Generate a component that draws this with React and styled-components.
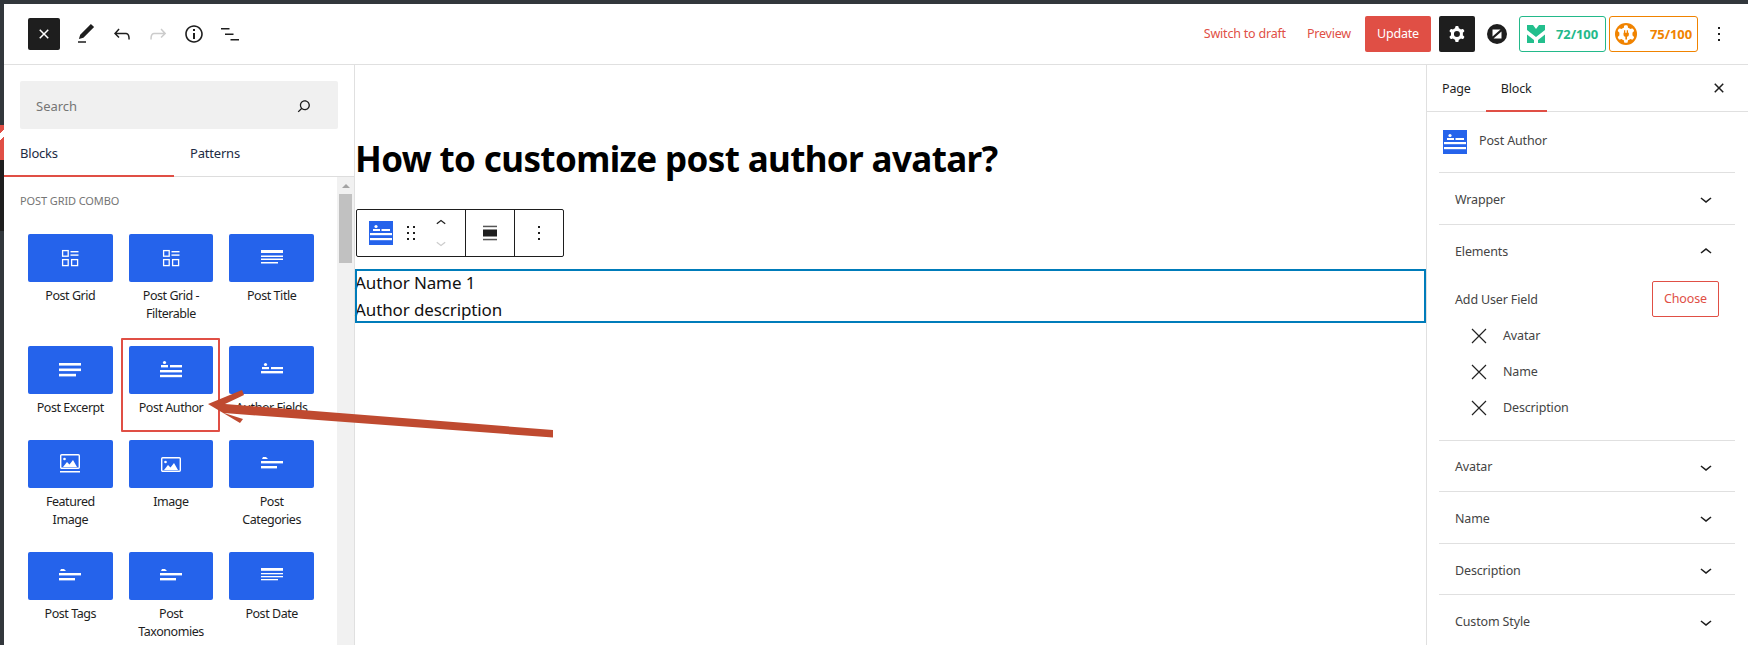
import React from 'react'
import styled, { createGlobalStyle } from 'styled-components'

const RED = '#e04f45'
const INK = '#1e1e1e'
const BLUE = '#2563eb'

const GlobalStyle = createGlobalStyle`
  html, body {
    margin: 0;
    padding: 0;
    background: #fff;
  }
  body {
    font-family: "Noto Sans", "Open Sans", sans-serif;
    font-size: 13px;
    color: ${INK};
  }
  * {
    box-sizing: border-box;
  }
`

const Shell = styled.div`
  position: relative;
  width: 1748px;
  height: 645px;
  overflow: hidden;
  display: flex;
  flex-direction: column;
`
const TopStrip = styled.div`
  height: 4px;
  flex: none;
  background: #32373c;
`
const Frame = styled.div`
  flex: 1;
  min-height: 0;
  display: flex;
`
const SideStrip = styled.div`
  width: 4px;
  flex: none;
  display: flex;
  flex-direction: column;
`
const StripPart = styled.div`
  height: ${p => p.$h}px;
  flex: ${p => (p.$h ? 'none' : 1)};
  background: ${p => p.$c};
`
const StripMark = styled.div`
  height: 35px;
  flex: none;
  background: linear-gradient(135deg, ${RED} 22%, #fff 22%, #fff 40%, ${RED} 40%);
`
const Editor = styled.div`
  flex: 1;
  min-width: 0;
  display: flex;
  flex-direction: column;
`
const TopBar = styled.header`
  height: 61px;
  flex: none;
  display: flex;
  align-items: center;
  justify-content: space-between;
  padding: 0 17px 1px 24px;
  border-bottom: 1px solid #e0e0e0;
`
const ToolGroup = styled.div`
  display: flex;
  align-items: center;
  gap: 12px;
`
const CloseButton = styled.div`
  width: 32px;
  height: 32px;
  margin-right: 2px;
  border-radius: 2px;
  background: ${INK};
  display: flex;
  align-items: center;
  justify-content: center;
`
const ActionGroup = styled.div`
  display: flex;
  align-items: center;
`
const TextAction = styled.span`
  color: ${RED};
  margin-right: ${p => p.$gap}px;
  font-size: 12.5px;
  letter-spacing: -0.2px;
`
const UpdateButton = styled.div`
  width: 66px;
  height: 36px;
  margin-right: 8px;
  border-radius: 2px;
  background: ${RED};
  color: #fff;
  font-size: 12.5px;
  letter-spacing: -0.2px;
  display: flex;
  align-items: center;
  justify-content: center;
`
const SettingsButton = styled.div`
  width: 36px;
  height: 36px;
  margin-right: 12px;
  border-radius: 2px;
  background: ${INK};
  display: flex;
  align-items: center;
  justify-content: center;
`
const ScoreBadge = styled.div`
  width: ${p => p.$w}px;
  height: 36px;
  margin-left: ${p => p.$gap}px;
  padding: 0 ${p => p.$pad}px;
  border: 1px solid ${p => p.$c};
  border-radius: 3px;
  color: ${p => p.$c};
  font-size: 13px;
  font-weight: 700;
  letter-spacing: -0.1px;
  display: flex;
  align-items: center;
  justify-content: space-between;
`
const KebabSlot = styled.div`
  width: 24px;
  height: 24px;
  margin-left: 9px;
`
const Body = styled.div`
  flex: 1;
  min-height: 0;
  display: flex;
`
const Inserter = styled.aside`
  width: 351px;
  flex: none;
  display: flex;
  flex-direction: column;
  border-right: 1px solid #e0e0e0;
`
const SearchBox = styled.div`
  height: 48px;
  margin: 16px 16px 0;
  padding: 1px 24px 0 16px;
  border-radius: 2px;
  background: #f0f0f0;
  color: #757575;
  display: flex;
  align-items: center;
  justify-content: space-between;
`
const InserterTabs = styled.div`
  height: 48px;
  flex: none;
  display: flex;
  border-bottom: 1px solid #ddd;
`
const InserterTab = styled.div`
  width: 170px;
  height: 48px;
  padding: 2px 16px 0;
  color: #1d2b44;
  font-size: 13px;
  letter-spacing: -0.2px;
  display: flex;
  align-items: center;
  border-bottom: 2px solid ${p => (p.$active ? RED : 'transparent')};
`
const InserterBody = styled.div`
  flex: 1;
  min-height: 0;
  display: flex;
`
const BlockList = styled.div`
  flex: 1;
  min-width: 0;
  padding-top: 17px;
`
const CategoryTitle = styled.div`
  margin-left: 16px;
  color: #757575;
  font-size: 11px;
  line-height: 14px;
  letter-spacing: -0.1px;
  text-transform: uppercase;
`
const TileGrid = styled.div`
  width: 286px;
  margin: 26px 0 0 24px;
  display: grid;
  grid-template-columns: repeat(3, 1fr);
  column-gap: 16px;
`
const Tile = styled.div`
  position: relative;
  padding-bottom: 23px;
  text-align: center;
  &::after {
    content: ${p => (p.$marked ? "''" : 'none')};
    position: absolute;
    top: -8px;
    left: -8px;
    right: -7px;
    bottom: 8px;
    border: 2px solid ${RED};
    border-radius: 1px;
  }
`
const TileIcon = styled.div`
  height: 48px;
  border-radius: 2px;
  background: ${BLUE};
  display: flex;
  align-items: center;
  justify-content: center;
`
const TileLabel = styled.div`
  margin-top: 5px;
  font-size: 12.5px;
  line-height: 18px;
  letter-spacing: -0.45px;
  white-space: pre-line;
`
const Scrollbar = styled.div`
  width: 17px;
  flex: none;
  padding: 7px 2px 0;
  background: #f1f1f1;
`
const ScrollArrow = styled.div`
  width: 0;
  height: 0;
  margin: 0 auto 6px;
  border-left: 4px solid transparent;
  border-right: 4px solid transparent;
  border-bottom: 4px solid #a3a3a3;
`
const ScrollThumb = styled.div`
  height: 69px;
  background: #c1c1c1;
`
const Canvas = styled.main`
  flex: 1;
  min-width: 0;
  padding-top: 72px;
`
const PostTitle = styled.h1`
  margin: 0;
  height: 44px;
  color: #000;
  font-size: 35px;
  font-weight: 700;
  line-height: 44px;
  letter-spacing: -0.62px;
  white-space: nowrap;
`
const BlockToolbar = styled.div`
  width: 208px;
  height: 48px;
  margin: 28px 0 12px 1px;
  border: 1px solid ${INK};
  border-radius: 2px;
  display: flex;
`
const ToolbarSection = styled.div`
  width: ${p => p.$w}px;
  flex: none;
  display: flex;
  align-items: center;
  justify-content: center;
  border-left: 1px solid ${INK};
`
const MoverSection = styled.div`
  width: 108px;
  flex: none;
  padding-left: 12px;
  display: flex;
  align-items: center;
`
const DragSlot = styled.div`
  width: 24px;
  height: 24px;
  margin-left: 6px;
`
const MoverStack = styled.div`
  width: 16px;
  margin-left: 10px;
  display: flex;
  flex-direction: column;
  align-items: center;
`
const SelectedBlock = styled.div`
  height: 54px;
  outline: 2px solid #007cba;
  outline-offset: -2px;
  color: #111;
  font-size: 17px;
  line-height: 27px;
  letter-spacing: -0.12px;
`
const Sidebar = styled.aside`
  width: 322px;
  flex: none;
  border-left: 1px solid #e0e0e0;
  color: #444;
  font-size: 12.5px;
  letter-spacing: -0.15px;
`
const SidebarTabs = styled.div`
  height: 47px;
  padding-right: 17px;
  display: flex;
  align-items: stretch;
  border-bottom: 1px solid #e0e0e0;
`
const SidebarTab = styled.div`
  padding: 2px 15px 0;
  color: ${INK};
  display: flex;
  align-items: center;
  border-bottom: 2px solid ${p => (p.$active ? RED : 'transparent')};
  margin-bottom: -1px;
`
const SidebarClose = styled.div`
  margin-left: auto;
  display: flex;
  align-items: center;
`
const Panels = styled.div`
  margin: 0 13px 0 12px;
`
const BlockCard = styled.div`
  height: 61px;
  padding-left: 4px;
  display: flex;
  align-items: center;
  gap: 12px;
  border-bottom: 1px solid #e0e0e0;
`
const CardName = styled.span`
  padding-bottom: 3px;
`
const Panel = styled.section`
  border-bottom: 1px solid #e0e0e0;
`
const PanelHeader = styled.div`
  height: ${p => (p.$open ? 52 : 50.6)}px;
  padding: 2px 17px 0 16px;
  display: flex;
  align-items: center;
  justify-content: space-between;
`
const PanelContent = styled.div`
  padding: 4px 16px 15px;
`
const FieldRow = styled.div`
  height: 36px;
  display: flex;
  align-items: center;
  justify-content: space-between;
`
const FieldLabel = styled.span`
  padding-top: 2px;
`
const ChooseButton = styled.div`
  width: 67px;
  height: 36px;
  border: 1px solid ${RED};
  border-radius: 2px;
  color: ${RED};
  display: flex;
  align-items: center;
  justify-content: center;
`
const FieldItem = styled.div`
  height: 36px;
  padding: 2px 0 0 16px;
  display: flex;
  align-items: center;
  gap: 16px;
`
const ArrowOverlay = styled.svg`
  position: absolute;
  left: 200px;
  top: 385px;
`

const Glyph = ({ d, size = 24, color = INK, evenOdd }) => (
  <svg width={size} height={size} viewBox='0 0 24 24' fill={color}>
    <path d={d} fillRule={evenOdd ? 'evenodd' : undefined} />
  </svg>
)

const paths = {
  pen: 'M20.1 5.1L16.9 2 6.2 12.7l-1.3 4.4 4.5-1.3L20.1 5.1zM4 20.8h8v-1.5H4v1.5z',
  undo: 'M18.3 11.7c-.6-.6-1.4-.9-2.3-.9H6.7l2.9-3.3-1.1-1-4.5 5L8.5 16l1-1-2.7-2.7H16c.5 0 .9.2 1.3.5 1 1 1 3.4 1 4.5v.3h1.5v-.2c0-1.5 0-4.3-1.5-5.7z',
  redo: 'M15.6 6.5l-1.1 1 2.9 3.3H8c-.9 0-1.7.3-2.3.9-1.4 1.5-1.4 4.2-1.4 5.6v.2h1.5v-.3c0-1.1 0-3.5 1-4.5.3-.3.7-.5 1.3-.5h9.2L14.5 15l1.1 1.1 4.6-4.6-4.6-5z',
  info: 'M12 3.2c-4.8 0-8.8 3.9-8.8 8.8 0 4.8 3.9 8.8 8.8 8.8 4.8 0 8.8-3.9 8.8-8.8 0-4.8-4-8.8-8.8-8.8zm0 16c-4 0-7.2-3.3-7.2-7.2C4.8 8 8 4.8 12 4.8s7.2 3.3 7.2 7.2c0 4-3.2 7.2-7.2 7.2zM11 17h2v-6h-2v6zm0-8h2V7h-2v2z',
  list: 'M3 6h8.5v1.5H3zM7 11.5h8.5V13H7zM12.5 17H21v1.5h-8.5z',
  close: 'M12 13.06l3.712 3.713 1.061-1.06L13.061 12l3.712-3.712-1.06-1.06L12 10.938 8.288 7.227l-1.061 1.06L10.939 12l-3.712 3.712 1.06 1.061L12 13.061z',
  search: 'M13 5c-3.3 0-6 2.7-6 6 0 1.4.5 2.7 1.3 3.7l-3.8 3.8 1.1 1.1 3.8-3.8c1 .8 2.3 1.3 3.7 1.3 3.3 0 6-2.7 6-6S16.3 5 13 5zm0 10.5c-2.5 0-4.5-2-4.5-4.5s2-4.5 4.5-4.5 4.5 2 4.5 4.5-2 4.5-4.5 4.5z',
  cog: 'M10.289 4.836A1 1 0 0111.275 4h1.306a1 1 0 01.987.836l.244 1.466c.787.26 1.503.679 2.108 1.218l1.393-.522a1 1 0 011.216.437l.653 1.13a1 1 0 01-.23 1.273l-1.148.944a6.025 6.025 0 010 2.435l1.149.946a1 1 0 01.23 1.272l-.653 1.13a1 1 0 01-1.216.437l-1.394-.522c-.605.54-1.32.958-2.108 1.218l-.244 1.466a1 1 0 01-.987.836h-1.306a1 1 0 01-.986-.836l-.244-1.466a5.995 5.995 0 01-2.108-1.218l-1.394.522a1 1 0 01-1.217-.436l-.653-1.131a1 1 0 01.23-1.272l1.149-.946a6.026 6.026 0 010-2.435l-1.148-.944a1 1 0 01-.23-1.272l.653-1.131a1 1 0 011.217-.437l1.393.522a5.994 5.994 0 012.108-1.218l.244-1.466zM14.929 12a3 3 0 11-6 0 3 3 0 016 0z',
  down: 'M17.5 11.6L12 16l-5.5-4.4.9-1.2L12 14l4.5-3.6 1 1.2z',
  up: 'M6.5 12.4L12 8l5.5 4.4-.9 1.2L12 10l-4.5 3.6-1-1.2z',
  kebab: 'M13 19h-2v-2h2v2zm0-6h-2v-2h2v2zm0-6h-2V5h2v2z',
  drag: 'M8 7h2V5H8v2zm0 6h2v-2H8v2zm0 6h2v-2H8v2zm6-14v2h2V5h-2zm0 8h2v-2h-2v2zm0 6h2v-2h-2v2z'
}

// the block glyphs are all white bars on the blue tile
const tileShapes = {
  grid: (
    <g>
      <g fill='none' stroke='#fff' strokeWidth='1.3'>
        <rect x='4.6' y='4.6' width='5.6' height='5.6' />
        <rect x='4.6' y='13.6' width='5.6' height='6' />
        <rect x='13.6' y='13.6' width='6' height='6' />
      </g>
      <rect x='12.5' y='5' width='8' height='1.4' />
      <rect x='12.5' y='8.4' width='8' height='1.4' />
    </g>
  ),
  title: (
    <g>
      <rect x='1' y='4' width='22' height='3' />
      <rect x='1' y='9.5' width='22' height='1.5' />
      <rect x='1' y='12.5' width='22' height='1.5' />
      <rect x='1' y='16' width='17' height='1.5' />
    </g>
  ),
  excerpt: (
    <g>
      <rect x='1' y='5' width='22' height='2.6' />
      <rect x='1' y='10.5' width='22' height='2.6' />
      <rect x='1' y='15.8' width='17' height='2.6' />
    </g>
  ),
  author: (
    <g>
      <circle cx='5.5' cy='4.5' r='1.6' />
      <rect x='2' y='7' width='7' height='2.4' />
      <rect x='11' y='7' width='12' height='2.4' />
      <rect x='1' y='12' width='22' height='2.4' />
      <rect x='1' y='16.8' width='22' height='2.4' />
    </g>
  ),
  fields: (
    <g>
      <circle cx='5.5' cy='6.5' r='1.6' />
      <rect x='2' y='9' width='7' height='2.2' />
      <rect x='11' y='9' width='12' height='2.2' />
      <rect x='1' y='13' width='22' height='2.4' />
    </g>
  ),
  featured: (
    <g>
      <rect x='2.7' y='2.7' width='18.6' height='13.6' rx='1' fill='none' stroke='#fff' strokeWidth='1.4' />
      <path d='M5 15l4-5 2.5 2.5 3.5-4.5 4 7z' />
      <circle cx='6.5' cy='7' r='1.3' />
      <rect x='2' y='19' width='20' height='1.5' />
    </g>
  ),
  image: (
    <g>
      <rect x='2.7' y='5.7' width='18.6' height='13.6' rx='1' fill='none' stroke='#fff' strokeWidth='1.4' />
      <path d='M5 18l4-5 2.5 2.5 3.5-4.5 4 7z' />
      <circle cx='6.5' cy='10' r='1.3' />
    </g>
  ),
  terms: (
    <g>
      <path d='M2 7l1-2h3l2 2z' />
      <rect x='1' y='9' width='22' height='2.4' />
      <rect x='1' y='14' width='16' height='2.4' />
    </g>
  ),
  date: (
    <g>
      <rect x='1' y='4' width='22' height='2.8' />
      <rect x='1' y='9' width='22' height='1.3' />
      <rect x='1' y='12' width='22' height='1.3' />
      <rect x='1' y='15' width='17' height='1.3' />
    </g>
  )
}

const TileGlyph = ({ kind }) => (
  <svg width='24' height='24' viewBox='0 0 24 24' fill='#fff'>
    {tileShapes[kind]}
  </svg>
)

const AuthorBadge = () => (
  <svg width='24' height='24' viewBox='0 0 24 24' fill='#fff' style={{ flex: 'none' }}>
    <rect width='24' height='24' fill={BLUE} />
    <circle cx='7' cy='5.5' r='1.6' />
    <rect x='4' y='8' width='7' height='2' />
    <rect x='12.5' y='8' width='8.5' height='2' />
    <rect x='1' y='12' width='22' height='2.2' />
    <rect x='1' y='17' width='22' height='2.2' />
  </svg>
)

const blocks = [
  { kind: 'grid', label: 'Post Grid' },
  { kind: 'grid', label: 'Post Grid -\nFilterable' },
  { kind: 'title', label: 'Post Title' },
  { kind: 'excerpt', label: 'Post Excerpt' },
  { kind: 'author', label: 'Post Author', marked: true },
  { kind: 'fields', label: 'Author Fields' },
  { kind: 'featured', label: 'Featured\nImage' },
  { kind: 'image', label: 'Image' },
  { kind: 'terms', label: 'Post\nCategories' },
  { kind: 'terms', label: 'Post Tags' },
  { kind: 'terms', label: 'Post\nTaxonomies' },
  { kind: 'date', label: 'Post Date' }
]

const MoneyLogo = () => (
  <svg width='18' height='18' viewBox='0 0 18 18' fill='#23bf8d'>
    <path d='M0 0h6l3 4 3-4h6v5l-9 7-9-7z' />
    <path d='M0 9.5l7 5.5v3H0zM18 9.5L11 15v3h7z' />
  </svg>
)

const PluginLogo = () => (
  <svg width='22' height='22' viewBox='0 0 24 24'>
    <circle cx='12' cy='12' r='12' fill='#f08300' />
    <path d={paths.cog} fill='#fff' transform='translate(-2.4 -2.4) scale(1.2)' />
    <circle cx='12' cy='12' r='4' fill='#fff' />
    <path d='M9.8 8h1.4v2.5h1.6V8h1.400v2.500h.9v2.300c0 1.200-.9 2.100-2 2.300V18h-1.800v-2.900c-1.100-.2-2-1.100-2-2.300v-2.300h.5z' fill='#f08300' />
  </svg>
)

const SwitchLogo = () => (
  <svg width='20' height='20' viewBox='0 0 20 20'>
    <circle cx='10' cy='10' r='10' fill={INK} />
    <path d='M5.5 5.500h8L5.500 12.500zM14.500 7.500v7H6.500z' fill='#fff' />
  </svg>
)

const AlignIcon = () => (
  <svg width='24' height='24' viewBox='0 0 24 24'>
    <rect x='5' y='4.7' width='14' height='1.5' fill='#555' />
    <rect x='5' y='8.5' width='14' height='7' fill={INK} />
    <rect x='5' y='17.8' width='14' height='1.5' fill='#555' />
  </svg>
)

const ThinCross = () => (
  <svg width='16' height='16' viewBox='0 0 16 16' stroke='#222' strokeWidth='1.2'>
    <path d='M1 1l14 14M15 1L1 15' />
  </svg>
)

const Arrow = () => (
  <ArrowOverlay width='360' height='55' viewBox='200 385 360 55'>
    <path
      d='M208 404L242 390 244 395 225 404 553 430 553 437.5 224 413 243 419 240 423z'
      fill='#bf4a30'
    />
  </ArrowOverlay>
)

const App = () => {
  return (
    <Shell>
      <GlobalStyle />
      <TopStrip />
      <Frame>
        <SideStrip>
          <StripPart $h={121} $c='#32373c' />
          <StripMark />
          <StripPart $h={71} $c='#1e1e1e' />
          <StripPart $c='#32373c' />
        </SideStrip>
        <Editor>
          <TopBar>
            <ToolGroup>
              <CloseButton>
                <Glyph d={paths.close} color='#fff' />
              </CloseButton>
              <Glyph d={paths.pen} />
              <Glyph d={paths.undo} />
              <Glyph d={paths.redo} color='#ccc' />
              <Glyph d={paths.info} />
              <Glyph d={paths.list} />
            </ToolGroup>
            <ActionGroup>
              <TextAction $gap={21}>Switch to draft</TextAction>
              <TextAction $gap={14}>Preview</TextAction>
              <UpdateButton>Update</UpdateButton>
              <SettingsButton>
                <Glyph d={paths.cog} color='#fff' evenOdd />
              </SettingsButton>
              <SwitchLogo />
              <ScoreBadge $w={87} $gap={12} $pad={7} $c='#23b98a'>
                <MoneyLogo />
                72/100
              </ScoreBadge>
              <ScoreBadge $w={89} $gap={3} $pad={5} $c='#f08300'>
                <PluginLogo />
                75/100
              </ScoreBadge>
              <KebabSlot>
                <Glyph d={paths.kebab} />
              </KebabSlot>
            </ActionGroup>
          </TopBar>
          <Body>
            <Inserter>
              <SearchBox>
                Search
                <Glyph d={paths.search} size={20} />
              </SearchBox>
              <InserterTabs>
                <InserterTab $active>Blocks</InserterTab>
                <InserterTab>Patterns</InserterTab>
              </InserterTabs>
              <InserterBody>
                <BlockList>
                  <CategoryTitle>Post Grid Combo</CategoryTitle>
                  <TileGrid>
                    {blocks.map(block => {
                      return (
                        <Tile key={block.label} $marked={block.marked}>
                          <TileIcon>
                            <TileGlyph kind={block.kind} />
                          </TileIcon>
                          <TileLabel>{block.label}</TileLabel>
                        </Tile>
                      )
                    })}
                  </TileGrid>
                </BlockList>
                <Scrollbar>
                  <ScrollArrow />
                  <ScrollThumb />
                </Scrollbar>
              </InserterBody>
            </Inserter>
            <Canvas>
              <PostTitle>How to customize post author avatar?</PostTitle>
              <BlockToolbar>
                <MoverSection>
                  <AuthorBadge />
                  <DragSlot>
                    <Glyph d={paths.drag} />
                  </DragSlot>
                  <MoverStack>
                    <Glyph d={paths.up} size={20} />
                    <Glyph d={paths.down} size={20} color='#ccc' />
                  </MoverStack>
                </MoverSection>
                <ToolbarSection $w={49}>
                  <AlignIcon />
                </ToolbarSection>
                <ToolbarSection $w={49}>
                  <Glyph d={paths.kebab} />
                </ToolbarSection>
              </BlockToolbar>
              <SelectedBlock>
                Author Name 1
                <br />
                Author description
              </SelectedBlock>
            </Canvas>
            <Sidebar>
              <SidebarTabs>
                <SidebarTab>Page</SidebarTab>
                <SidebarTab $active>Block</SidebarTab>
                <SidebarClose>
                  <Glyph d={paths.close} />
                </SidebarClose>
              </SidebarTabs>
              <Panels>
                <BlockCard>
                  <AuthorBadge />
                  <CardName>Post Author</CardName>
                </BlockCard>
                <Panel>
                  <PanelHeader>
                    Wrapper
                    <Glyph d={paths.down} />
                  </PanelHeader>
                </Panel>
                <Panel>
                  <PanelHeader $open>
                    Elements
                    <Glyph d={paths.up} />
                  </PanelHeader>
                  <PanelContent>
                    <FieldRow>
                      <FieldLabel>Add User Field</FieldLabel>
                      <ChooseButton>Choose</ChooseButton>
                    </FieldRow>
                    {['Avatar', 'Name', 'Description'].map(name => {
                      return (
                        <FieldItem key={name}>
                          <ThinCross />
                          {name}
                        </FieldItem>
                      )
                    })}
                  </PanelContent>
                </Panel>
                {['Avatar', 'Name', 'Description', 'Custom Style'].map(name => {
                  return (
                    <Panel key={name}>
                      <PanelHeader>
                        {name}
                        <Glyph d={paths.down} />
                      </PanelHeader>
                    </Panel>
                  )
                })}
              </Panels>
            </Sidebar>
          </Body>
        </Editor>
      </Frame>
      <Arrow />
    </Shell>
  )
}

export default App
